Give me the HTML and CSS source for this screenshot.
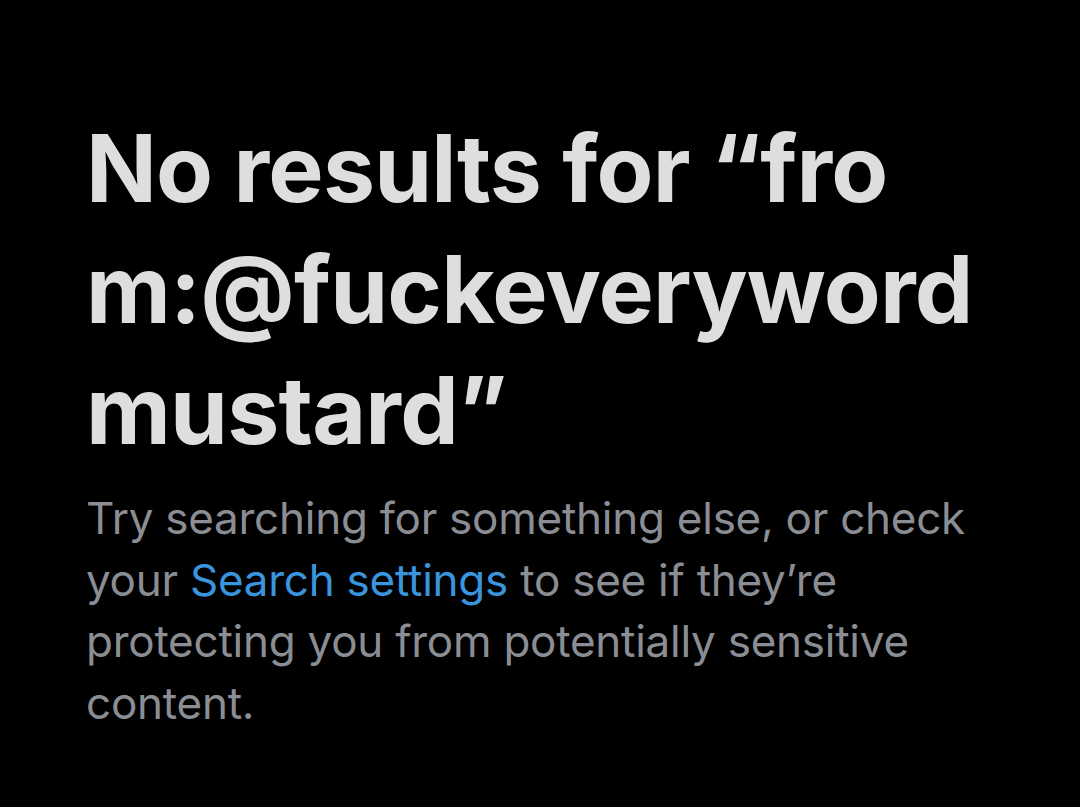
FILE: index.html
```html
<!DOCTYPE html>
<html>
<head>
<meta charset="utf-8">
<link rel="stylesheet" href="styles.css">
</head>
<body>
<main class="empty">
  <h1 class="title">No results for “fro<br>m:@fuckeveryword<br>mustard”</h1>
  <p class="desc">Try searching for something else, or check<br>your <a class="link" href="#">Search settings</a> to see if they’re<br>protecting you from potentially sensitive<br>content.</p>
</main>
</body>
</html>
```
FILE: styles.css
```css
html, body {
  margin: 0;
  padding: 0;
  background: #000;
}
body {
  width: 1080px;
  height: 807px;
  overflow: hidden;
  font-family: Inter, "Liberation Sans", sans-serif;
}
.empty {
  padding: 108px 0 0 86px;
}
.title {
  margin: 0;
  font-size: 93px;
  line-height: 121px;
  font-weight: 700;
  color: #dedede;
  letter-spacing: -0.8px;
}
.desc {
  margin: 17px 0 0;
  font-size: 44px;
  line-height: 61.5px;
  font-weight: 400;
  color: #8a8e94;
  letter-spacing: -0.25px;
}
.link {
  color: #3a95df;
  text-decoration: none;
}
```
